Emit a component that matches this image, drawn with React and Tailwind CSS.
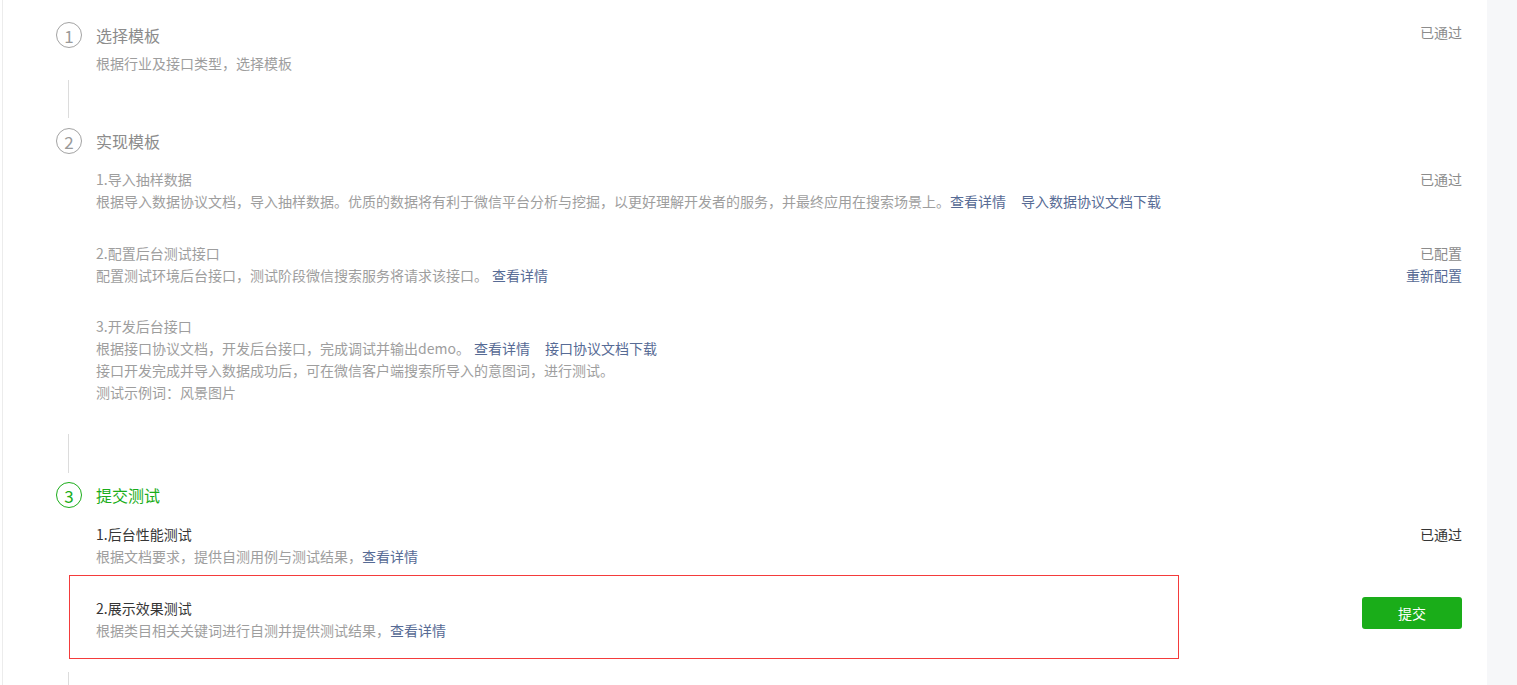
import React from "react";

const Link = ({ children, className = "" }) => (
  <a className={"text-[#576b95] cursor-pointer " + className}>{children}</a>
);

const Circle = ({ n, active }) => (
  <div
    className={
      "w-[26px] h-[26px] rounded-full border flex items-center justify-center text-[17px] leading-none shrink-0 " +
      (active ? "border-[#1aad19] text-[#1aad19]" : "border-[#a3a3a3] text-[#9a9a9a]")
    }
  >
    {n}
  </div>
);

const VLine = ({ className = "" }) => (
  <div className={"ml-[12px] w-px bg-[#dcdcdc] " + className} />
);

export default function App() {
  return (
    <div
      className="flex h-[685px] overflow-hidden bg-white text-[14px] leading-[22px] font-[family-name:'Noto_Sans_CJK_SC','Microsoft_YaHei',sans-serif]"
    >
      <div className="ml-[2px] w-[1485px] shrink-0 border-l border-[#ececec] pl-[53px] pr-[25px] pt-[22px]">
        {/* Step 1 */}
        <div className="flex items-center h-[26px]">
          <Circle n="1" />
          <div className="ml-[14px] text-[16px] text-[#8c8c8c]">选择模板</div>
          <div className="ml-auto self-start -mt-[1px] text-[#8c8c8c]">已通过</div>
        </div>
        <div className="pl-[40px] mt-[4px] text-[#9e9e9e]">根据行业及接口类型，选择模板</div>
        <VLine className="mt-[6px] h-[38px]" />

        {/* Step 2 */}
        <div className="mt-[10px] flex items-center h-[26px]">
          <Circle n="2" />
          <div className="ml-[14px] text-[16px] text-[#8c8c8c]">实现模板</div>
        </div>
        <div className="pl-[40px]">
          <div className="mt-[14px] flex justify-between">
            <div>
              <div className="text-[#9e9e9e]">1.导入抽样数据</div>
              <div className="text-[#9e9e9e]">
                根据导入数据协议文档，导入抽样数据。优质的数据将有利于微信平台分析与挖掘，以更好理解开发者的服务，并最终应用在搜索场景上。
                <Link>查看详情</Link>
                <Link className="ml-[15px]">导入数据协议文档下载</Link>
              </div>
            </div>
            <div className="text-right text-[#8c8c8c]">已通过</div>
          </div>

          <div className="mt-[30px] flex justify-between">
            <div>
              <div className="text-[#9e9e9e]">2.配置后台测试接口</div>
              <div className="text-[#9e9e9e]">
                配置测试环境后台接口，测试阶段微信搜索服务将请求该接口。
                <Link className="ml-[4px]">查看详情</Link>
              </div>
            </div>
            <div className="text-right">
              <div className="text-[#8c8c8c]">已配置</div>
              <Link className="block">重新配置</Link>
            </div>
          </div>

          <div className="mt-[29px] text-[#9e9e9e]">
            <div>3.开发后台接口</div>
            <div>
              根据接口协议文档，开发后台接口，完成调试并输出demo。
              <Link className="ml-[4px]">查看详情</Link>
              <Link className="ml-[15px]">接口协议文档下载</Link>
            </div>
            <div>接口开发完成并导入数据成功后，可在微信客户端搜索所导入的意图词，进行测试。</div>
            <div>测试示例词：风景图片</div>
          </div>
        </div>
        <VLine className="mt-[31px] h-[39px]" />

        {/* Step 3 */}
        <div className="mt-[9px] flex items-center h-[26px]">
          <Circle n="3" active />
          <div className="ml-[14px] text-[16px] text-[#1aad19]">提交测试</div>
        </div>
        <div className="pl-[40px]">
          <div className="mt-[15px] flex justify-between">
            <div>
              <div className="text-[#353535]">1.后台性能测试</div>
              <div className="text-[#9e9e9e]">
                根据文档要求，提供自测用例与测试结果，<Link>查看详情</Link>
              </div>
            </div>
            <div className="text-right text-[#353535]">已通过</div>
          </div>

          <div className="mt-[8px] flex items-start justify-between">
            <div className="-ml-[27px] w-[1110px] border border-[#f43b3b] pl-[26px] pt-[21px] pb-[17px]">
              <div className="text-[#353535]">2.展示效果测试</div>
              <div className="text-[#9e9e9e]">
                根据类目相关关键词进行自测并提供测试结果，<Link>查看详情</Link>
              </div>
            </div>
            <button className="mt-[22px] w-[100px] h-[32px] rounded-[3px] bg-[#1aad19] text-white text-[14px] leading-[32px]">
              提交
            </button>
          </div>
        </div>
        <VLine className="mt-[13px] h-[60px]" />
      </div>
      <div className="flex-1 bg-[#f6f7f9]" />
    </div>
  );
}
